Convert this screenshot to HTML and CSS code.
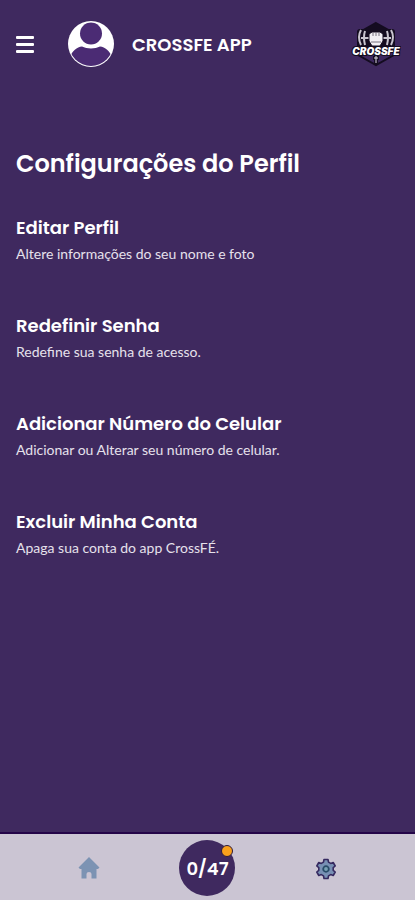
FILE: index.html
```html
<!DOCTYPE html>
<html lang="pt-BR">
<head>
    <meta charset="UTF-8">
    <meta name="viewport" content="width=device-width, initial-scale=1.0">
    <title>CROSSFE APP</title>
    <link rel="stylesheet" href="styles.css">
</head>
<body>
    <!-- Top bar -->
    <header class="top-bar">
        <button class="menu-btn" type="button" aria-label="Menu">
            <span></span>
            <span></span>
            <span></span>
        </button>
        <svg class="avatar" viewBox="0 0 48 48" aria-hidden="true">
            <clipPath id="avatarClip"><circle cx="24" cy="24" r="22"/></clipPath>
            <circle cx="24" cy="24" r="23" fill="#fff"/>
            <g clip-path="url(#avatarClip)" fill="#4b2b74">
                <circle cx="24" cy="13.500" r="11"/>
                <path d="M0 48V37L3 37C5 31 10 27 15 26.500C20 29 28 29 33 26.500C38 27 43 31 45 37L48 37V48Z"/>
            </g>
        </svg>
        <span class="app-name">CROSSFE APP</span>
        <svg class="logo" viewBox="0 0 50 48" role="img" aria-label="CROSSFE">
            <path d="M25 3L43 13V35L25 45L7 35V13Z" fill="#3d285f" stroke="#140c20" stroke-width="2"/>
            <path d="M15 9L25 3L35 9V26H15Z" fill="#140c20"/>
            <!-- Barbell plates -->
            <rect x="6" y="9" width="38" height="18" rx="3" fill="#140c20"/>
            <g fill="none" stroke="#c9c5cf" stroke-width="2">
                <path d="M10 10Q6 17 10 25"/>
                <path d="M14 11Q12 17 14 25"/>
                <path d="M36 11Q38 17 36 25"/>
                <path d="M40 10Q44 17 40 25"/>
                <path d="M10 18H18M32 18H40"/>
            </g>
            <!-- Fist -->
            <path d="M18 14L21 12H29L32 14V21L29 26H21L18 21Z" fill="#f2eff5" stroke="#140c20"/>
            <path d="M22 12V16M25 12V16M28 12V16M20 22H30" stroke="#77717f" fill="none"/>
            <path d="M25 35V44M22 38H28" stroke="#140c20" stroke-width="4"/>
            <path d="M25 36V43M23 38H27" stroke="#ddd8e2" stroke-width="1"/>
            <text class="logo-text" x="25" y="35" text-anchor="middle">CROSSFE</text>
        </svg>
    </header>

    <!-- Profile settings -->
    <main class="content">
        <h1>Configurações do Perfil</h1>
        <a class="option" href="#editar">
            <h2>Editar Perfil</h2>
            <p>Altere informações do seu nome e foto</p>
        </a>
        <a class="option" href="#senha">
            <h2>Redefinir Senha</h2>
            <p>Redefine sua senha de acesso.</p>
        </a>
        <a class="option" href="#celular">
            <h2>Adicionar Número do Celular</h2>
            <p>Adicionar ou Alterar seu número de celular.</p>
        </a>
        <a class="option" href="#excluir">
            <h2>Excluir Minha Conta</h2>
            <p>Apaga sua conta do app CrossFÉ.</p>
        </a>
    </main>

    <!-- Bottom navigation -->
    <nav class="bottom-nav">
        <a href="#inicio" aria-label="Início">
            <svg class="nav-icon" viewBox="0 0 24 24">
                <path d="M12 1L22.500 11.500L21 13H19.500V22.500H14.500V18Q14.500 16 12 16Q9.500 16 9.500 18V22.500H4.500V13H3L1.500 11.500Z" fill="#7c93b3"/>
            </svg>
        </a>
        <a class="counter" href="#treinos">
            0/47
            <span class="counter-dot"></span>
        </a>
        <a href="#config" aria-label="Configurações">
            <svg class="nav-icon" viewBox="-12 -13 24 24">
                <path d="M-2.500 -6.900L-2 -9.500H2L2.500 -6.900L4.700 -5.600L7.200 -6.500L9.200 -3L7.200 -1.300V1.300L9.200 3L7.200 6.500L4.700 5.600L2.500 6.900L2 9.500H-2L-2.500 6.900L-4.700 5.600L-7.200 6.500L-9.200 3L-7.200 1.300V-1.300L-9.200 -3L-7.200 -6.500L-4.700 -5.600Z" fill="#7890b4" stroke="#35295f" stroke-width="1.600" stroke-linejoin="round"/>
                <circle r="2.800" fill="#78a0b4" stroke="#284b68" stroke-width="1.800"/>
            </svg>
        </a>
    </nav>
</body>
</html>
```
FILE: styles.css
```css
* {
    box-sizing: border-box;
}

body {
    margin: 0;
    min-height: 100vh;
    display: flex;
    flex-direction: column;
    background-color: #3f295f;
    color: #fff;
    font-family: Lato, sans-serif;
}

h1,
h2,
p {
    margin: 0;
}

h1,
h2,
.app-name,
.counter {
    font-family: Poppins, Inter, sans-serif;
    font-weight: 600;
}

/* Top bar */
.top-bar {
    display: flex;
    align-items: center;
    height: 88px;
    padding: 0 14px 0 16px;
}

.menu-btn {
    display: flex;
    flex-direction: column;
    gap: 4px;
    width: 18px;
    margin-right: 33px;
    padding: 0;
    border: none;
    background: none;
    cursor: pointer;
}

.menu-btn span {
    height: 3px;
    width: 100%;
    border-radius: 1px;
    background-color: #fff;
}

.avatar {
    width: 48px;
    height: 48px;
    margin-right: 17px;
}

.app-name {
    font-size: 18px;
}

.logo {
    width: 50px;
    height: 48px;
    margin-left: auto;
}

.logo-text {
    font: italic 900 10px Inter, sans-serif;
    fill: #fff;
    stroke: #140c20;
    stroke-width: 2px;
    paint-order: stroke;
}

/* Settings list */
.content {
    flex: 1;
    display: flex;
    flex-direction: column;
    gap: 46px;
    padding: 58px 16px 24px;
}

h1 {
    margin-bottom: -14px;
    font-size: 24px;
    line-height: 36px;
}

.option {
    color: #fff;
    text-decoration: none;
}

h2 {
    font-size: 18px;
    line-height: 28px;
}

.option p {
    color: #e6e1ec;
    font-size: 14px;
    line-height: 24px;
}

/* Bottom navigation */
.bottom-nav {
    display: grid;
    grid-template-columns: repeat(3, 1fr);
    place-items: center;
    height: 68px;
    padding: 2px 30px 0;
    border-top: 2px solid #240548;
    background-color: #cbc5d3;
}

.bottom-nav a {
    display: flex;
    align-items: center;
    justify-content: center;
}

.nav-icon {
    width: 24px;
    height: 24px;
}

.bottom-nav .counter {
    position: relative;
    width: 56px;
    height: 56px;
    border-radius: 50%;
    background-color: #3f295f;
    color: #fff;
    font-size: 18px;
    text-decoration: none;
}

.counter-dot {
    position: absolute;
    top: 5px;
    right: 2px;
    width: 12px;
    height: 12px;
    border: 1px solid #2c1a3c;
    border-radius: 50%;
    background-color: #f9a01b;
}
```
